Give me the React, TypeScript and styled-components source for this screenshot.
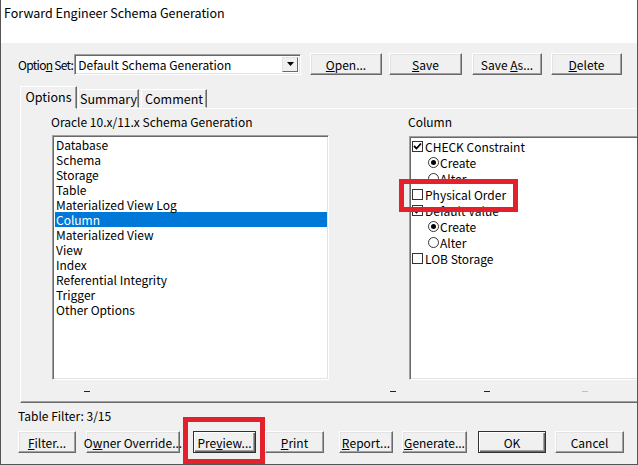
import React from 'react'
import styled, { createGlobalStyle, css } from 'styled-components'

const GlobalStyle = createGlobalStyle`
  html, body {
    margin: 0;
    padding: 0;
    background: #fff;
  }
  body {
    font-family: 'Noto Sans CJK KR', 'Noto Sans', sans-serif;
    font-size: 12px;
    line-height: 15px;
    color: #000;
  }
`

const Window = styled.div`
  position: relative;
  width: 638px;
  height: 465px;
  box-sizing: border-box;
  border-left: 1px solid #555;
  border-right: 1px solid #555;
  border-bottom: 1px solid #555;
  background: #f0f0f0;
  overflow: hidden;
`

const TitleBar = styled.div`
  height: 43px;
  background: #fff;
  padding: 5px 0 0 3px;
  box-sizing: border-box;
  font-size: 12.5px;
  line-height: 16px;
`

const Body = styled.div`
  display: flex;
  flex-direction: column;
`

const OptionRow = styled.div`
  display: flex;
  align-items: center;
  height: 22px;
  margin-top: 10px;
  padding-left: 17px;
`

const OptionField = styled.div`
  width: 283px;
  display: flex;
  align-items: center;
  margin-right: 9px;
`

const FieldLabel = styled.span`
  flex: none;
  white-space: nowrap;
  letter-spacing: -0.7px;
  margin-right: 1px;
`

const Combo = styled.div`
  flex: 1;
  height: 21px;
  box-sizing: border-box;
  display: flex;
  align-items: center;
  background: #fff;
  border: 1px solid;
  border-color: #a0a0a0 #fff #fff #a0a0a0;
  box-shadow: inset 1px 1px #696969, inset -1px -1px #e3e3e3;
  padding: 0 2px 0 3px;
`

const ComboText = styled.span`
  flex: 1;
  white-space: nowrap;
`

const ComboArrow = styled.div`
  width: 16px;
  height: 15px;
  box-sizing: border-box;
  background: #f0f0f0;
  border: 1px solid;
  border-color: #e3e3e3 #696969 #696969 #e3e3e3;
  display: flex;
  align-items: center;
  justify-content: center;
`

const Button = styled.div<{ $w: number; $gap?: number; $default?: boolean }>`
  width: ${(p) => p.$w}px;
  height: 22px;
  flex: none;
  box-sizing: border-box;
  margin-right: ${(p) => p.$gap ?? 0}px;
  display: flex;
  align-items: center;
  justify-content: center;
  white-space: pre;
  background: #f0f0f0;
  border: 1px solid;
  border-color: #fff #696969 #696969 #fff;
  box-shadow: inset -1px -1px #a0a0a0, inset 1px 1px #e3e3e3;
  ${(p) =>
    p.$default &&
    css`
      border-color: #303030;
      box-shadow: inset 1px 1px #fff, inset -1px -1px #696969, inset -2px -2px #a0a0a0;
    `}
`

const TabStrip = styled.div`
  display: flex;
  align-items: flex-end;
  height: 21px;
  margin-top: 12px;
  padding-left: 19px;
  position: relative;
  z-index: 1;
`

const Tab = styled.div<{ $active?: boolean; $w: number }>`
  width: ${(p) => p.$w}px;
  box-sizing: border-box;
  height: ${(p) => (p.$active ? 23 : 19)}px;
  margin-bottom: ${(p) => (p.$active ? -1 : 0)}px;
  margin-right: ${(p) => (p.$active ? 1 : 2)}px;
  padding-bottom: ${(p) => (p.$active ? 3 : 0)}px;
  display: flex;
  align-items: center;
  justify-content: center;
  font-size: 12.5px;
  white-space: nowrap;
  background: #f0f0f0;
  border: 1px solid;
  border-color: #fff #696969 transparent #fff;
  box-shadow: inset -1px 0 #a0a0a0;
`

const Panel = styled.div`
  margin-left: 19px;
  width: 660px;
  height: 295px;
  box-sizing: border-box;
  border: 1px solid;
  border-color: #fff #696969 #696969 #fff;
  box-shadow: inset -1px -1px #a0a0a0;
  display: flex;
  flex-direction: column;
  padding: 6px 0 0 30px;
`

const Columns = styled.div`
  display: flex;
  gap: 79px;
`

const Column = styled.div<{ $w: number }>`
  width: ${(p) => p.$w}px;
  display: flex;
  flex-direction: column;
`

const GroupLabel = styled.div`
  height: 13px;
  line-height: 13px;
  white-space: nowrap;
`

const ListBox = styled.div<{ $top: number; $h: number }>`
  margin-top: ${(p) => p.$top}px;
  margin-left: 1px;
  height: ${(p) => p.$h}px;
  box-sizing: border-box;
  background: #fff;
  border: 1px solid;
  border-color: #a0a0a0 #fff #fff #a0a0a0;
  box-shadow: inset 1px 1px #696969, inset -1px -1px #e3e3e3;
  padding: 1px 1px 0 2px;
`

const ListItem = styled.div<{ $selected?: boolean }>`
  height: 15px;
  line-height: 15px;
  padding-left: 1px;
  white-space: nowrap;
  ${(p) =>
    p.$selected &&
    css`
      background: #0078d7;
      color: #fff;
    `}
`

const TreeRow = styled.div<{ $indent: number }>`
  height: 16px;
  display: flex;
  align-items: center;
  padding-left: ${(p) => p.$indent}px;
  white-space: nowrap;
`

const CheckBox = styled.div`
  width: 11px;
  height: 11px;
  box-sizing: border-box;
  border: 1px solid #333;
  background: #fff;
  margin-right: 2px;
  display: flex;
  align-items: center;
  justify-content: center;
`

const Radio = styled.div<{ $on?: boolean }>`
  width: 11px;
  height: 11px;
  box-sizing: border-box;
  border: 1px solid #333;
  border-radius: 50%;
  margin-right: 1px;
  display: flex;
  align-items: center;
  justify-content: center;
  &::after {
    content: '';
    display: ${(p) => (p.$on ? 'block' : 'none')};
    width: 5px;
    height: 5px;
    border-radius: 50%;
    background: #000;
  }
`

const DashRow = styled.div`
  display: flex;
  height: 2px;
  margin-top: 11px;
`

const Dash = styled.div<{ $faint?: boolean; $left: number }>`
  width: 6px;
  height: 1px;
  margin-left: ${(p) => p.$left}px;
  background: ${(p) => (p.$faint ? '#c0c0c0' : '#222')};
`

const FilterText = styled.div`
  height: 12px;
  margin-top: 8px;
  padding-left: 17px;
  overflow: hidden;
  line-height: 10px;
`

const BottomRow = styled.div`
  display: flex;
  height: 22px;
  margin-top: 8px;
  padding-left: 17px;
`

const Mark = styled.div<{ $x: number; $y: number; $w: number; $h: number }>`
  position: absolute;
  left: ${(p) => p.$x}px;
  top: ${(p) => p.$y}px;
  width: ${(p) => p.$w}px;
  height: ${(p) => p.$h}px;
  box-sizing: border-box;
  border: 5px solid #e3202b;
  pointer-events: none;
`

const leftItems = [
  'Database',
  'Schema',
  'Storage',
  'Table',
  'Materialized View Log',
  'Column',
  'Materialized View',
  'View',
  'Index',
  'Referential Integrity',
  'Trigger',
  'Other Options',
]

type Node = { kind: 'check' | 'radio'; label: string; on: boolean; indent: number }

const treeRows: Node[] = [
  { kind: 'check', label: 'CHECK Constraint', on: true, indent: 0 },
  { kind: 'radio', label: 'Create', on: true, indent: 16 },
  { kind: 'radio', label: 'Alter', on: false, indent: 16 },
  { kind: 'check', label: 'Physical Order', on: false, indent: 0 },
  { kind: 'check', label: 'Default Value', on: true, indent: 0 },
  { kind: 'radio', label: 'Create', on: true, indent: 16 },
  { kind: 'radio', label: 'Alter', on: false, indent: 16 },
  { kind: 'check', label: 'LOB Storage', on: false, indent: 0 },
]

const Tick = () => (
  <svg width="9" height="9" viewBox="0 0 9 9">
    <path d="M1 4 L3.5 6.5 L8 1.5" fill="none" stroke="#000" strokeWidth="1.8" />
  </svg>
)

export default function App() {
  return (
    <>
      <GlobalStyle />
      <Window>
        <TitleBar>Forward Engineer Schema Generation</TitleBar>
        <Body>
          <OptionRow>
            <OptionField>
              <FieldLabel>
                Optio<u>n</u> Set:
              </FieldLabel>
              <Combo>
                <ComboText>Default Schema Generation</ComboText>
                <ComboArrow>
                  <svg width="7" height="4" viewBox="0 0 7 4">
                    <path d="M0 0 H7 L3.5 4 Z" fill="#000" />
                  </svg>
                </ComboArrow>
              </Combo>
            </OptionField>
            <Button $w={72} $gap={7}>
              <u>O</u>pen...
            </Button>
            <Button $w={73} $gap={10}>
              <u>S</u>ave
            </Button>
            <Button $w={70} $gap={9}>
              Save <u>A</u>s...
            </Button>
            <Button $w={71}>
              <u>D</u>elete
            </Button>
          </OptionRow>

          <TabStrip>
            <Tab $active $w={57}>Options</Tab>
            <Tab $w={61}>Summary</Tab>
            <Tab $w={66}>Comment</Tab>
          </TabStrip>

          <Panel>
            <Columns>
              <Column $w={278}>
                <GroupLabel>Oracle 10.x/11.x Schema Generation</GroupLabel>
                <ListBox $top={7} $h={245}>
                  {leftItems.map((item) => (
                    <ListItem key={item} $selected={item === 'Column'}>
                      {item}
                    </ListItem>
                  ))}
                </ListBox>
              </Column>
              <Column $w={260}>
                <GroupLabel>Column</GroupLabel>
                <ListBox $top={8} $h={244}>
                  {treeRows.map((row, i) => (
                    <TreeRow key={i} $indent={row.indent}>
                      {row.kind === 'check' ? (
                        <CheckBox>{row.on && <Tick />}</CheckBox>
                      ) : (
                        <Radio $on={row.on} />
                      )}
                      {row.label}
                    </TreeRow>
                  ))}
                </ListBox>
              </Column>
            </Columns>
            <DashRow>
              <Dash $left={33} />
              <Dash $left={300} />
              <Dash $left={88} />
              <Dash $left={92} $faint />
            </DashRow>
          </Panel>

          <FilterText>Table Filter: 3/15</FilterText>

          <BottomRow>
            <Button $w={58} $gap={10}>
              <u>F</u>ilter...
            </Button>
            <Button $w={94} $gap={13}>
              O<u>w</u>ner Override...
            </Button>
            <Button $w={63} $gap={9} $default>
              Pre<u>v</u>iew...
            </Button>
            <Button $w={59} $gap={15}>
              <u>P</u>rint
            </Button>
            <Button $w={54} $gap={9}>
              <u>R</u>eport...
            </Button>
            <Button $w={65} $gap={11}>
              <u>G</u>enerate...
            </Button>
            <Button $w={68} $gap={9} $default>
              OK
            </Button>
            <Button $w={69}>Cancel</Button>
          </BottomRow>
        </Body>
        <Mark $x={398} $y={179} $w={119} $h={33} />
        <Mark $x={182} $y={417} $w={82} $h={47} />
      </Window>
    </>
  )
}
